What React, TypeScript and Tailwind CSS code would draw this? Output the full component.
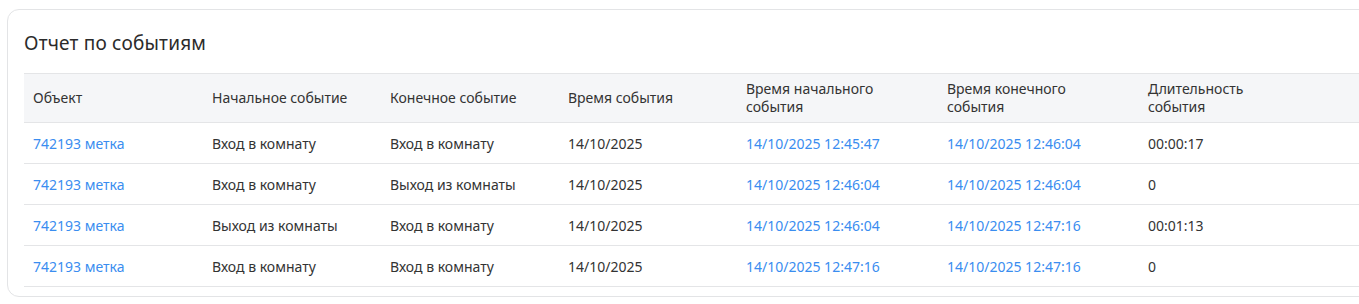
const columns = [
  { title: 'Объект', width: 'w-[179px]' },
  { title: 'Начальное событие', width: 'w-[178px]' },
  { title: 'Конечное событие', width: 'w-[178px]' },
  { title: 'Время события', width: 'w-[178px]' },
  { title: 'Время начального события', width: 'w-[201px]' },
  { title: 'Время конечного события', width: 'w-[201px]' },
  { title: 'Длительность события', width: 'w-[240px]' },
]

const rows = [
  ['742193 метка', 'Вход в комнату', 'Вход в комнату', '14/10/2025', '14/10/2025 12:45:47', '14/10/2025 12:46:04', '00:00:17'],
  ['742193 метка', 'Вход в комнату', 'Выход из комнаты', '14/10/2025', '14/10/2025 12:46:04', '14/10/2025 12:46:04', '0'],
  ['742193 метка', 'Выход из комнаты', 'Вход в комнату', '14/10/2025', '14/10/2025 12:46:04', '14/10/2025 12:47:16', '00:01:13'],
  ['742193 метка', 'Вход в комнату', 'Вход в комнату', '14/10/2025', '14/10/2025 12:47:16', '14/10/2025 12:47:16', '0'],
]

// columns rendered as links
const linkCols = new Set([0, 4, 5])

export default function App() {
  return (
    <div className="h-[304px] w-[1359px] overflow-hidden bg-white pl-[7px] pt-[9px] font-['Noto_Sans',sans-serif] text-[#333]">
      <div className="w-[1420px] rounded-[12px] border border-[#e3e4e6] bg-white pb-[9px] pl-[16px] pt-[20px]">
        <h2 className="mb-[17px] text-[19px] leading-[26px] tracking-[0.2px] text-[#2b2b2b]">Отчет по событиям</h2>
        <table className="border-collapse text-left text-[14px]">
          <thead>
            <tr className="border-y border-[#e4e5e7] bg-[#f5f6f8]">
              {columns.map((c) => (
                <th key={c.title} className={`${c.width} h-[48px] px-[9px] py-[6px] align-middle text-[14px] font-normal leading-[18px] text-[#333]`}>
                  <span className="block max-w-[150px]">{c.title}</span>
                </th>
              ))}
            </tr>
          </thead>
          <tbody>
            {rows.map((r, i) => (
              <tr key={i} className="border-b border-[#e4e5e7]">
                {r.map((cell, j) => (
                  <td
                    key={j}
                    className={`h-[41px] px-[9px] pt-[2px] align-middle leading-[20px] ${linkCols.has(j) ? 'text-[#3a8df0]' : 'text-[#333]'}`}
                  >
                    {cell}
                  </td>
                ))}
              </tr>
            ))}
          </tbody>
        </table>
      </div>
    </div>
  )
}
